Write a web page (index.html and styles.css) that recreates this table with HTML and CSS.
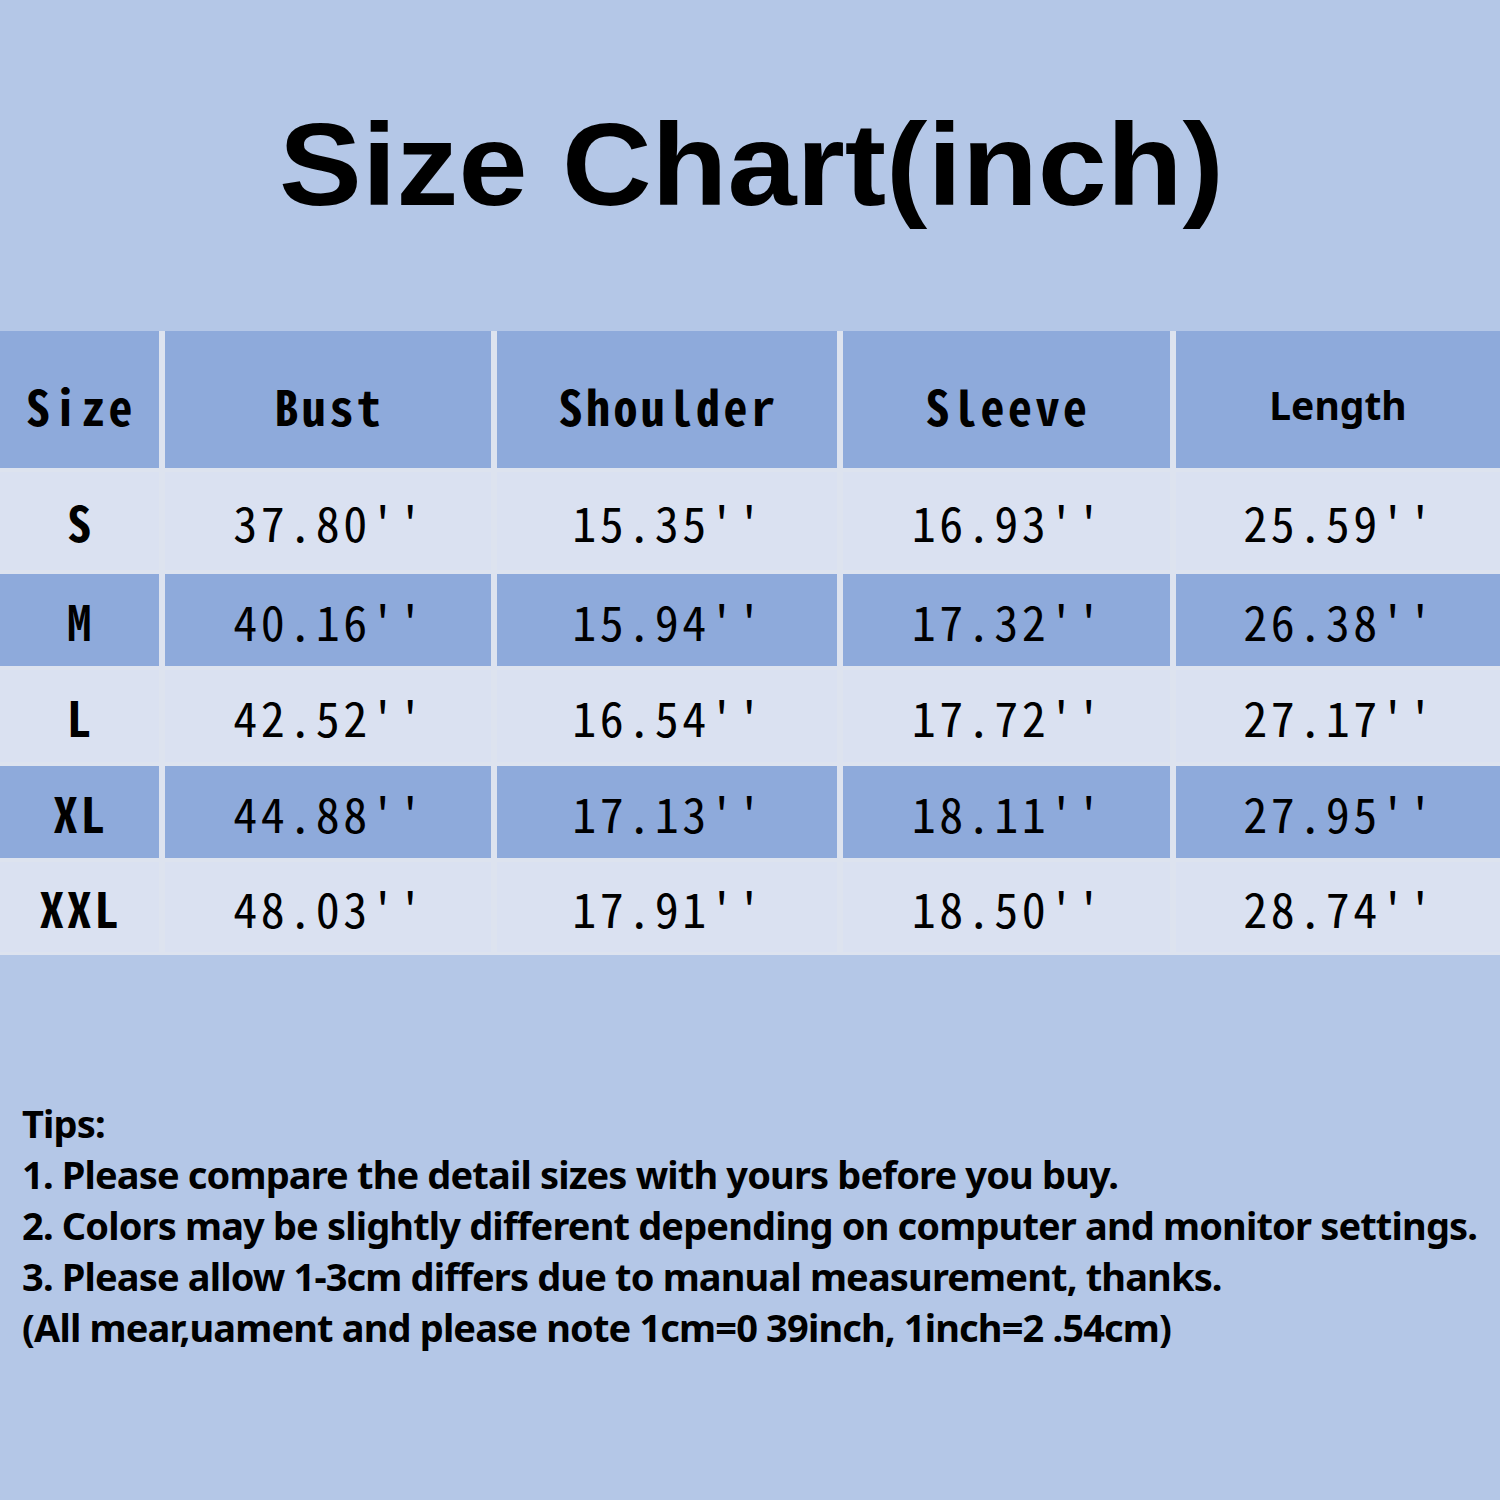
FILE: index.html
```html
<!DOCTYPE html>
<html>
<head>
<meta charset="utf-8">
<link rel="stylesheet" href="styles.css">
</head>
<body>
<div class="page">
  <h1 class="title"><span class="title-text">Size Chart(inch)</span></h1>
  <div class="chart">
    <div class="cell head">Size</div>
    <div class="cell head">Bust</div>
    <div class="cell head">Shoulder</div>
    <div class="cell head">Sleeve</div>
    <div class="cell head head-alt">Length</div>

    <div class="cell light size">S</div>
    <div class="cell light">37.80''</div>
    <div class="cell light">15.35''</div>
    <div class="cell light">16.93''</div>
    <div class="cell light">25.59''</div>

    <div class="cell dark size">M</div>
    <div class="cell dark">40.16''</div>
    <div class="cell dark">15.94''</div>
    <div class="cell dark">17.32''</div>
    <div class="cell dark">26.38''</div>

    <div class="cell light size">L</div>
    <div class="cell light">42.52''</div>
    <div class="cell light">16.54''</div>
    <div class="cell light">17.72''</div>
    <div class="cell light">27.17''</div>

    <div class="cell dark size">XL</div>
    <div class="cell dark">44.88''</div>
    <div class="cell dark">17.13''</div>
    <div class="cell dark">18.11''</div>
    <div class="cell dark">27.95''</div>

    <div class="cell light size">XXL</div>
    <div class="cell light">48.03''</div>
    <div class="cell light">17.91''</div>
    <div class="cell light">18.50''</div>
    <div class="cell light">28.74''</div>
  </div>
  <div class="tips">
    <p>Tips:</p>
    <p>1. Please compare the detail sizes with yours before you buy.</p>
    <p>2. Colors may be slightly different depending on computer and monitor settings.</p>
    <p>3. Please allow 1-3cm differs due to manual measurement, thanks.</p>
    <p>(All mear,uament and please note 1cm=0 39inch, 1inch=2 .54cm)</p>
  </div>
</div>
</body>
</html>
```

FILE: styles.css
```css
html, body {
  margin: 0;
  padding: 0;
  background: #b4c7e7;
}
.page {
  width: 1500px;
  height: 1500px;
  overflow: hidden;
  background: #b4c7e7;
  color: #000;
}
.title {
  margin: 107px 0 0 0;
  height: 116px;
  line-height: 116px;
  font-family: "Liberation Sans", Arial, sans-serif;
  font-weight: 700;
  font-size: 116px;
  text-align: center;
  padding-left: 2px;
}
.title-text {
  display: inline-block;
  transform: scaleX(1.07);
}
.chart {
  margin-top: 108px;
  display: grid;
  grid-template-columns: 159px 326px 340px 327px 324px;
  grid-template-rows: 137px 98px 92px 92px 92px 90px;
  column-gap: 6px;
  row-gap: 4px;
  background: #dde3ef;
  padding-bottom: 3px;
}
.cell {
  display: flex;
  align-items: center;
  justify-content: center;
  font-family: "Noto Sans Mono CJK SC", "DejaVu Sans Mono", monospace;
  font-size: 48px;
  letter-spacing: 3.5px;
  padding-left: 3px;
  box-sizing: border-box;
  color: #000;
  white-space: pre;
}
.head {
  background: #8eaadb;
  font-weight: 700;
  padding-top: 10px;
}
.head-alt {
  font-family: "Noto Sans", sans-serif;
  font-size: 39px;
  letter-spacing: 0;
  padding-left: 0;
}
.light {
  background: #dae1f1;
}
.dark {
  background: #8eaadb;
}
.size {
  font-weight: 700;
}
.tips {
  margin-top: 143px;
  padding-left: 22px;
  font-family: "Noto Sans", sans-serif;
  font-weight: 700;
  font-size: 38px;
  line-height: 51px;
  letter-spacing: -0.85px;
}
.tips p {
  margin: 0;
  white-space: nowrap;
}
```
